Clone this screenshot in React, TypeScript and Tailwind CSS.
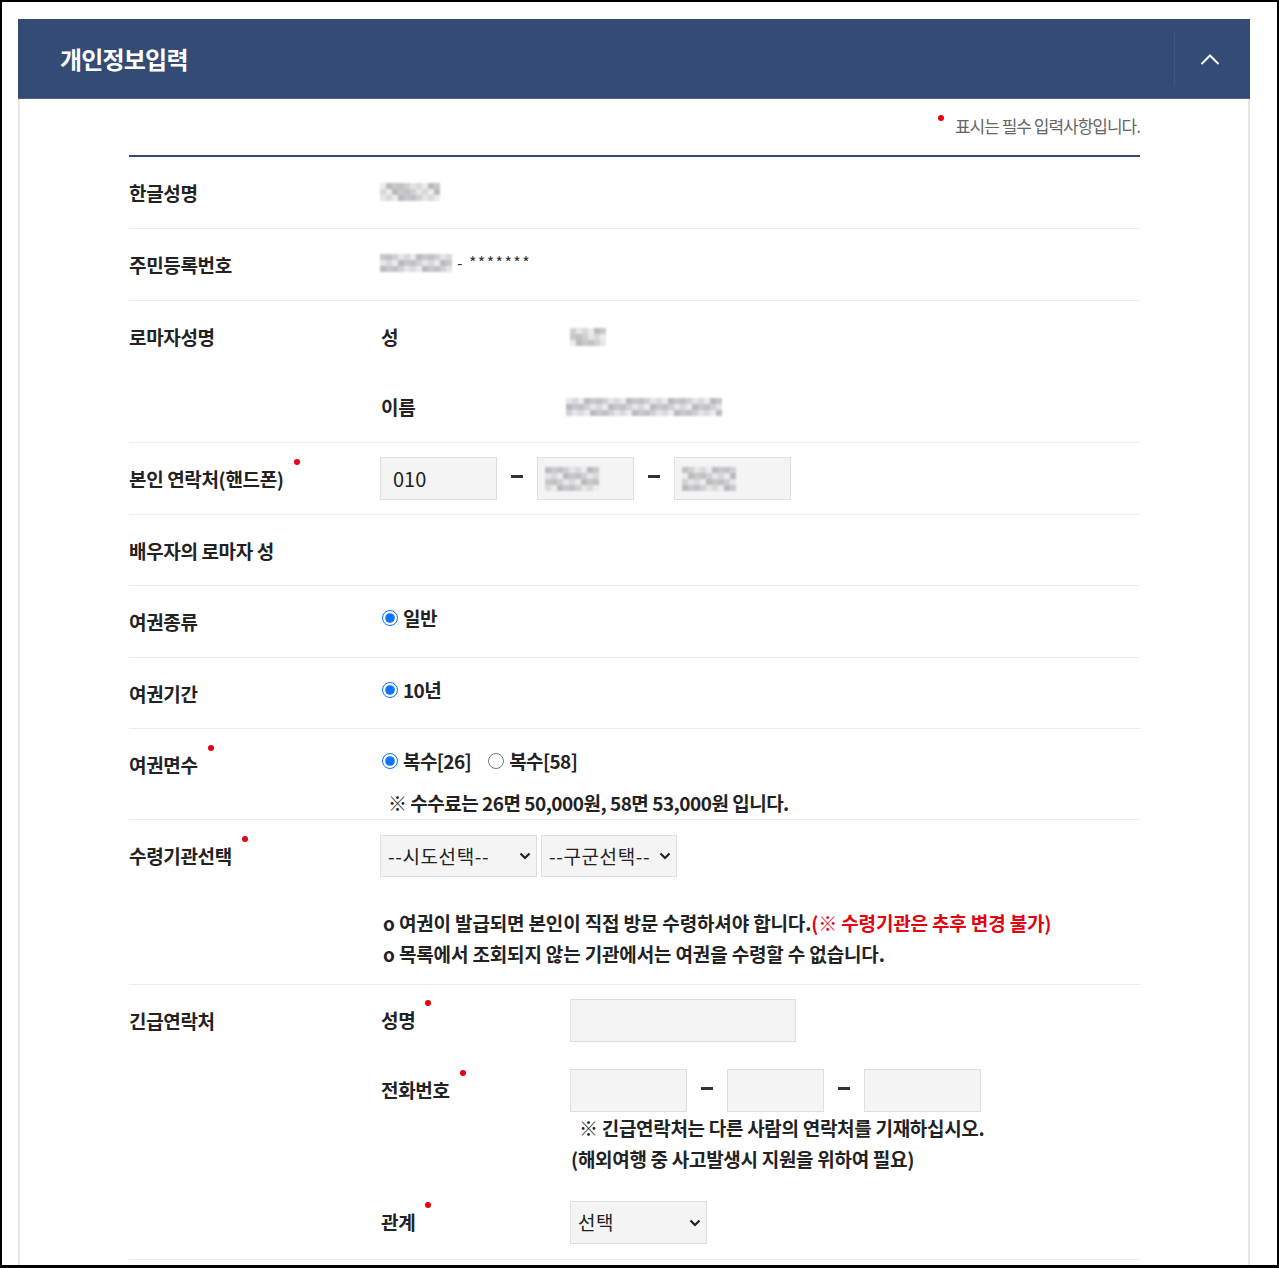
import React from "react";

const FONT = "font-['Noto_Sans_CJK_KR','Noto_Sans',sans-serif]";

// pixelated stand-in for masked personal values
const Mosaic = ({ cols, rows = 3, seed = 1 }: { cols: number; rows?: number; seed?: number }) => {
  const shades = ["#d9d9dc", "#c7c8cc", "#e6e6e8", "#b9babf", "#d0d0d3", "#ececee", "#c0c1c5"];
  const cells: string[] = [];
  for (let i = 0; i < cols * rows; i++) cells.push(shades[(i * 3 + seed * 5 + (i % cols) * 2) % shades.length]);
  return (
    <div
      className="grid blur-[0.8px]"
      style={{ gridTemplateColumns: `repeat(${cols}, 6px)`, gridAutoRows: "6px" }}
    >
      {cells.map((c, i) => (
        <span key={i} style={{ background: c }} />
      ))}
    </div>
  );
};

const Dot = () => (
  <span className="absolute -right-[16px] -top-[7px] w-[6px] h-[6px] rounded-full bg-[#e60012]" />
);

const Req = ({ children }: { children: React.ReactNode }) => (
  <span className="relative inline-block">
    {children}
    <Dot />
  </span>
);

const Chevron = () => (
  <svg width="12" height="8" viewBox="0 0 12 8" className="shrink-0">
    <polyline points="1.5,1.5 6,6 10.5,1.5" fill="none" stroke="#222" strokeWidth="2.2" />
  </svg>
);

const Select = ({ label, w }: { label: string; w: string }) => (
  <div
    className={`${w} h-[42px] flex items-center justify-between pl-[7px] pr-[5px] bg-[#f4f4f4] border border-[#dedede] text-[19px] font-normal text-[#222] tracking-[0.6px]`}
  >
    <span>{label}</span>
    <Chevron />
  </div>
);

const Field = ({ w, children }: { w: string; children?: React.ReactNode }) => (
  <div className={`${w} h-[43px] flex items-center px-[12px] bg-[#f4f4f4] border border-[#dedede] text-[20px] text-[#222]`}>
    {children}
  </div>
);

const Dash = () => <span className="mx-[14px] w-[12px] h-[3px] bg-[#333] -translate-y-[2px]" />;

const Phone = ({ first, masked }: { first?: string; masked?: boolean }) => (
  <div className="flex items-center">
    <Field w="w-[117px]">{first}</Field>
    <Dash />
    <Field w="w-[97px]">{masked && <div className="-ml-[5px]"><Mosaic cols={9} rows={4} seed={2} /></div>}</Field>
    <Dash />
    <Field w="w-[117px]">{masked && <div className="-ml-[5px]"><Mosaic cols={9} rows={4} seed={4} /></div>}</Field>
  </div>
);

const Radio = ({ label, checked }: { label: string; checked?: boolean }) => (
  <label className="flex items-center gap-[5px]">
    <input type="radio" defaultChecked={checked} className="w-[16px] h-[16px] m-0 accent-[#0a74ff]" />
    <span>{label}</span>
  </label>
);

const Row = ({
  label,
  children,
  pb = "pb-[22px]",
}: {
  label: React.ReactNode;
  children?: React.ReactNode;
  pb?: string;
}) => (
  <div className="flex border-b border-[#ececec]">
    <div className={`w-[251px] shrink-0 pt-[23px] ${pb} leading-[26px] font-bold text-[19px] tracking-[-0.35px] text-[#222]`}>
      {label}
    </div>
    <div className="flex-1 min-w-0">{children}</div>
  </div>
);

export default function App() {
  return (
    <div className={`w-[1279px] h-[1268px] overflow-hidden bg-white border-2 border-b-[3px] border-black ${FONT}`}>
      <div className="ml-[16px] mt-[17px] w-[1232px]">
        {/* header */}
        <div className="h-[80px] bg-[#344c75] flex items-center border-b border-[#4c6089]">
          <h1 className="flex-1 pl-[42px] text-white text-[24px] font-bold tracking-[-0.8px]">개인정보입력</h1>
          <div className="w-px h-[54px] bg-[#3f5883]" />
          <div className="w-[70px] mr-[5px] flex justify-center">
            <svg width="20" height="12" viewBox="0 0 20 12">
              <polyline points="1.5,11 10,2.5 18.5,11" fill="none" stroke="#fff" strokeWidth="2" />
            </svg>
          </div>
        </div>

        {/* body */}
        <div className="border-x-2 border-[#e6e6e6] pb-[40px]">
          <div className="w-[1011px] ml-[109px]">
            <div className="h-[56px] flex justify-end items-start pt-[16px]">
              <span className="relative text-[17px] tracking-[-1px] text-[#666] leading-[22px]">
                <span className="absolute -left-[17px] top-[0px] w-[6px] h-[6px] rounded-full bg-[#e60012]" />
                표시는 필수 입력사항입니다.
              </span>
            </div>
            <div className="h-[2px] bg-[#344c75]" />

            <Row label="한글성명">
              <div className="pt-[26px]">
                <Mosaic cols={10} rows={3} seed={1} />
              </div>
            </Row>

            <Row label="주민등록번호">
              <div className="pt-[25px] flex items-start gap-[5px]">
                <Mosaic cols={12} rows={3} seed={3} />
                <span className="text-[16px] leading-[16px] text-[#333] tracking-[1.4px]">- *******</span>
              </div>
            </Row>

            <Row label="로마자성명">
              <div className="pt-[23px] pb-[22px] flex flex-col gap-[44px] font-bold text-[19px] leading-[26px] tracking-[-0.35px] text-[#222]">
                <div className="flex items-center">
                  <span className="w-[190px] pl-[1px]">성</span>
                  <Mosaic cols={6} rows={3} seed={5} />
                </div>
                <div className="flex items-center">
                  <span className="w-[186px] pl-[1px]">이름</span>
                  <Mosaic cols={26} rows={3} seed={6} />
                </div>
              </div>
            </Row>

            <Row label={<Req>본인 연락처(핸드폰)</Req>}>
              <div className="py-[14px]">
                <Phone first="010" masked />
              </div>
            </Row>

            <Row label="배우자의 로마자 성" pb="pb-[21px]" />

            <Row label="여권종류">
              <div className="pt-[19px] leading-[26px] font-bold text-[19px] tracking-[-0.6px] text-[#222] pl-[2px]">
                <Radio label="일반" checked />
              </div>
            </Row>

            <Row label="여권기간" pb="pb-[21px]">
              <div className="pt-[19px] leading-[26px] font-bold text-[19px] tracking-[-0.6px] text-[#222] pl-[2px]">
                <Radio label="10년" checked />
              </div>
            </Row>

            <Row label={<Req>여권면수</Req>}>
              <div className="pt-[19px] pb-[3px] font-bold text-[19px] tracking-[-0.6px] text-[#222] pl-[2px]">
                <div className="flex items-center gap-[17px] h-[26px]">
                  <Radio label="복수[26]" checked />
                  <Radio label="복수[58]" />
                </div>
                <p className="mt-[16px] leading-[26px] pl-[6px] text-[19px] tracking-[-0.5px]">
                  ※ 수수료는 26면 50,000원, 58면 53,000원 입니다.
                </p>
              </div>
            </Row>

            <Row label={<Req>수령기관선택</Req>}>
              <div className="pt-[15px] pb-[15px]">
                <div className="flex gap-[4px]">
                  <Select label="--시도선택--" w="w-[157px]" />
                  <Select label="--구군선택--" w="w-[136px]" />
                </div>
                <div className="mt-[30px] pl-[3px] font-bold text-[19px] leading-[31px] tracking-[-0.15px] text-[#222]">
                  <p>
                    o 여권이 발급되면 본인이 직접 방문 수령하셔야 합니다.
                    <span className="text-[#e8000f]">(※ 수령기관은 추후 변경 불가)</span>
                  </p>
                  <p>o 목록에서 조회되지 않는 기관에서는 여권을 수령할 수 없습니다.</p>
                </div>
              </div>
            </Row>

            <Row label="긴급연락처">
              <div className="pt-[14px] pb-[15px] font-bold text-[19px] tracking-[-0.35px] text-[#222]">
                <div className="flex items-start">
                  <span className="w-[190px] pl-[1px] pt-[8px] leading-[26px]">
                    <Req>성명</Req>
                  </span>
                  <Field w="w-[226px]" />
                </div>
                <div className="flex items-start mt-[27px]">
                  <span className="w-[190px] pl-[1px] pt-[8px] leading-[26px]">
                    <Req>전화번호</Req>
                  </span>
                  <div>
                    <Phone />
                    <div className="text-[19px] leading-[31px] tracking-[-0.3px]">
                      <p className="pl-[9px]">※ 긴급연락처는 다른 사람의 연락처를 기재하십시오.</p>
                      <p className="pl-[1px]">(해외여행 중 사고발생시 지원을 위하여 필요)</p>
                    </div>
                  </div>
                </div>
                <div className="flex items-start mt-[27px]">
                  <span className="w-[190px] pl-[1px] pt-[8px] leading-[26px]">
                    <Req>관계</Req>
                  </span>
                  <Select label="선택" w="w-[137px] h-[43px]" />
                </div>
              </div>
            </Row>
          </div>
        </div>
      </div>
    </div>
  );
}
